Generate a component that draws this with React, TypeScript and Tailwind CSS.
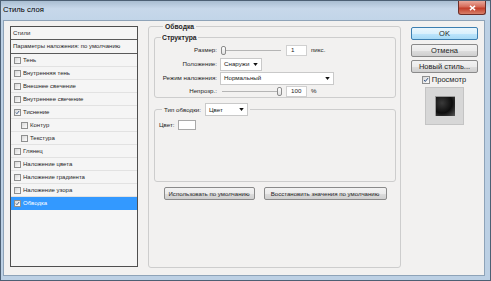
import React from "react";

const items = [
  { label: "Тень" },
  { label: "Внутренняя тень" },
  { label: "Внешнее свечение" },
  { label: "Внутреннее свечение" },
  { label: "Тиснение", checked: true },
  { label: "Контур", sub: true },
  { label: "Текстура", sub: true },
  { label: "Глянец" },
  { label: "Наложение цвета" },
  { label: "Наложение градиента" },
  { label: "Наложение узора" },
  { label: "Обводка", checked: true, active: true },
];

const Check = ({ checked, size = "s" }: { checked?: boolean; size?: "s" | "m" }) => (
  <span
    className={`flex shrink-0 items-center justify-center border border-[#8e8f8f] bg-[linear-gradient(135deg,#d8d8d8,#fdfdfd)] ${
      size === "s" ? "h-[7px] w-[7px]" : "h-[8px] w-[8px]"
    }`}
  >
    {checked && (
      <svg viewBox="0 0 8 8" className="h-full w-full">
        <path d="M1.4 4.1 L3.1 5.9 L6.7 1.5" fill="none" stroke="#21457a" strokeWidth="1.3" />
      </svg>
    )}
  </span>
);

const Select = ({ value, w }: { value: string; w: string }) => (
  <div
    className={`flex h-[13px] items-center justify-between border border-[#c9c9c9] bg-white pl-[3px] pr-[3px] text-[6.2px] text-[#222] ${w}`}
  >
    <span>{value}</span>
    <svg viewBox="0 0 6 4" className="h-[3px] w-[5px]">
      <path d="M0 0 H6 L3 4 Z" fill="#111" />
    </svg>
  </div>
);

const Slider = ({ at }: { at: "start" | "end" }) => (
  <div className="relative h-[11px] w-[63px]">
    <div className="absolute left-[2px] right-[2px] top-[5px] h-px bg-[#b5b5b5]" />
    <div
      className={`absolute top-[1px] h-[9px] w-[5px] rounded-[2px] border border-[#8c8c8c] bg-[linear-gradient(#ffffff,#e0e0e0)] ${
        at === "start" ? "left-[1px]" : "right-[1px]"
      }`}
    />
  </div>
);

const NumInput = ({ value }: { value: string }) => (
  <div className="flex h-[11px] w-[21px] items-center border border-[#d0d0d0] bg-white pl-[4px] text-[6.2px]">
    {value}
  </div>
);

const Btn = ({ children, w, def }: { children: React.ReactNode; w: string; def?: boolean }) => (
  <div
    className={`flex shrink-0 items-center justify-center rounded-[2px] border ${
      def
        ? "border-[#3c7fb1] bg-[linear-gradient(#eaf6fd,#d9f0fc_50%,#bee6fd_51%,#a7d9f5)]"
        : "border-[#8a8a8a] bg-[linear-gradient(#f2f2f2,#ebebeb_50%,#dddddd_51%,#cfcfcf)]"
    } ${w}`}
  >
    {children}
  </div>
);

export default function App() {
  return (
    <div className="flex h-[281px] w-[491px] flex-col border border-[#4d6074] bg-[#bcd0e4] font-['Liberation_Sans',Arial,sans-serif] text-[#1e1e1e]">
      {/* title bar */}
      <div className="flex h-[19px] shrink-0 items-start justify-between bg-[linear-gradient(#a9bdd1,#c7d8ea_40%,#c2d5e8)]">
        <span className="mt-[3px] pl-[2px] text-[7.7px] text-black">Стиль слоя</span>
        <div className="mr-[4px] flex h-[14px] w-[28px] items-center justify-center rounded-b-[3px] border border-t-0 border-[#6c2e28] bg-[linear-gradient(#e9a99c,#d56a58_45%,#c23e2a_55%,#d8806a)]">
          <svg viewBox="0 0 8 7" className="h-[6px] w-[7px]">
            <path d="M1 1 L7 6 M7 1 L1 6" stroke="#fff" strokeWidth="1.6" />
          </svg>
        </div>
      </div>

      {/* client */}
      <div className="mb-[4px] ml-[2px] mr-[5px] flex flex-1 gap-[10px] border border-[#8ea3b8] bg-[#f2f1f0] pl-[6px] pr-[4px] pt-[1px]">
        {/* styles list */}
        <div className="mt-[4px] flex h-[241px] w-[128px] shrink-0 flex-col border border-[#4f4f4f] bg-[#f5f5f5] text-[6px]">
          <div className="flex h-[13px] shrink-0 items-center border-b border-[#5a5a5a] pl-[2px]">Стили</div>
          <div className="flex h-[14px] shrink-0 items-center border-b border-[#5a5a5a] pl-[2px]">
            Параметры наложения: по умолчанию
          </div>
          {items.map((it) => (
            <div
              key={it.label}
              className={`flex h-[13px] shrink-0 items-center gap-[2px] border-b ${
                it.active ? "border-[#3399ff] bg-[#3399ff] text-white" : "border-[#e2e2e2]"
              } ${it.sub ? "pl-[10px]" : "pl-[3px]"}`}
            >
              <Check checked={it.checked} />
              <span>{it.label}</span>
            </div>
          ))}
        </div>

        {/* main panel */}
        <fieldset className="h-[246px] w-[253px] shrink-0 rounded-[3px] border border-[#cdcdcd] pl-[5px] pr-[4px]">
          <legend className="ml-[9px] px-[2px] text-[6.8px] font-bold leading-[9px]">Обводка</legend>

          <fieldset className="mt-[2px] rounded-[3px] border border-[#cdcdcd] text-[6.2px]">
            <legend className="ml-[6px] px-[1px] text-[6.8px] font-bold leading-[9px]">Структура</legend>
            <div className="mt-[1px] flex h-[14px] items-center gap-[3px]">
              <span className="w-[62px] text-right">Размер:</span>
              <Slider at="start" />
              <NumInput value="1" />
              <span className="ml-[1px]">пикс.</span>
            </div>
            <div className="flex h-[14px] items-center gap-[3px]">
              <span className="w-[62px] text-right">Положение:</span>
              <Select value="Снаружи" w="w-[42px]" />
            </div>
            <div className="flex h-[14px] items-center gap-[3px]">
              <span className="w-[62px] text-right">Режим наложения:</span>
              <Select value="Нормальный" w="w-[114px]" />
            </div>
            <div className="flex h-[12px] items-center gap-[3px]">
              <span className="w-[62px] text-right">Непрозр.:</span>
              <Slider at="end" />
              <NumInput value="100" />
              <span className="ml-[1px]">%</span>
            </div>
          </fieldset>

          <fieldset className="mt-[5px] h-[79px] rounded-[3px] border border-[#cdcdcd] text-[6.2px]">
            <legend className="ml-[7px] flex items-center gap-[4px] px-[2px]">
              <span>Тип обводки:</span>
              <Select value="Цвет" w="w-[43px]" />
            </legend>
            <div className="mt-[4px] flex items-center gap-[3px] pl-[4px]">
              <span>Цвет:</span>
              <div className="h-[10px] w-[18px] border border-[#a9a9a9] bg-white" />
            </div>
          </fieldset>

          <div className="mt-[5px] flex justify-center gap-[9px] text-[6.1px]">
            <Btn w="h-[13px] w-[91px]">Использовать по умолчанию</Btn>
            <Btn w="h-[13px] w-[123px]">Восстановить значения по умолчанию</Btn>
          </div>
        </fieldset>

        {/* buttons column */}
        <div className="mt-[5px] flex w-[67px] shrink-0 flex-col items-center text-[7.5px]">
          <Btn w="h-[13px] w-[67px]" def>
            OK
          </Btn>
          <Btn w="mt-[4px] h-[13px] w-[67px]">Отмена</Btn>
          <Btn w="mt-[3px] h-[13px] w-[67px]">Новый стиль...</Btn>
          <div className="mt-[3px] flex h-[8px] items-center gap-[2px] pr-[1px]">
            <Check checked size="m" />
            <span>Просмотр</span>
          </div>
          <div className="mt-[3px] flex h-[38px] w-[39px] items-center justify-center border border-[#c4c4c4] bg-[#d7d7d7]">
            <div className="h-[20px] w-[20px] bg-[radial-gradient(circle_at_35%_35%,#3a3a3a,#0d0d0d_55%,#5a5a5a)] shadow-[inset_1px_1px_0_#9a9a9a]" />
          </div>
        </div>
      </div>
    </div>
  );
}
